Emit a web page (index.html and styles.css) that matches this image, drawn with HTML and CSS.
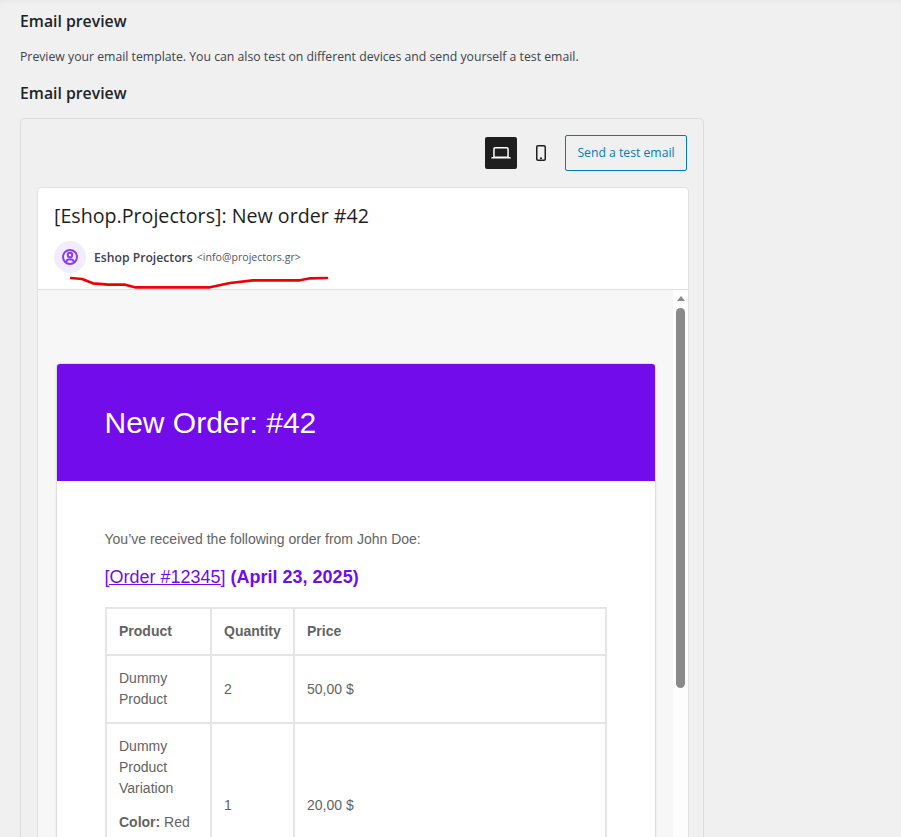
FILE: index.html
```html
<!DOCTYPE html>
<html lang="en">
<head>
<meta charset="utf-8">
<title>Email preview</title>
<link rel="stylesheet" href="styles.css">
</head>
<body>
<main class="page">
  <h2 class="title first">Email preview</h2>
  <p class="desc">Preview your email template. You can also test on different devices and send yourself a test email.</p>
  <h2 class="title">Email preview</h2>
  <section class="panel">
    <div class="toolbar">
      <button class="icon-btn active" aria-label="Desktop">
        <svg width="24" height="24" viewBox="0 0 24 24" fill="currentColor"><path d="M20.500 16h-.7V8c0-1.100-.9-2-2-2H6.200c-1.100 0-2 .9-2 2v8h-.7c-.8 0-1.500.7-1.500 1.500h20c0-.8-.7-1.500-1.500-1.500zM5.700 8c0-.3.2-.5.5-.5h11.600c.3 0 .5.200.5.500v7.600H5.700V8z"/></svg>
      </button>
      <button class="icon-btn" aria-label="Mobile">
        <svg width="24" height="24" viewBox="0 0 24 24" fill="currentColor"><path d="M15 4H9c-1.100 0-2 .9-2 2v12c0 1.100.9 2 2 2h6c1.100 0 2-.9 2-2V6c0-1.100-.9-2-2-2zm.5 14c0 .3-.2.500-.5.500H9c-.3 0-.5-.2-.5-.5V6c0-.3.2-.5.5-.5h6c.3 0 .5.200.5.500v12zM11 16.500h2V18h-2z"/></svg>
      </button>
      <button class="send">Send a test email</button>
    </div>
    <div class="card">
      <header class="mail-head">
        <h3 class="subject">[Eshop.Projectors]: New order #42</h3>
        <div class="sender">
          <span class="avatar">
            <svg width="20" height="20" viewBox="0 0 20 20" fill="none" stroke="#8b3df0" stroke-width="2"><circle cx="10" cy="10" r="7"/><circle cx="10" cy="8" r="2.300"/><path d="M6 15c.5-1.900 1.800-2.700 4-2.700s3.500.8 4 2.700"/></svg>
          </span>
          <strong class="sender-name">Eshop Projectors</strong>
          <span class="sender-mail">&lt;info@projectors.gr&gt;</span>
        </div>
        <svg class="scribble" width="262" height="16" viewBox="0 0 262 16" fill="none" stroke="#f00000" stroke-width="2.700" stroke-linecap="round" stroke-linejoin="round"><path d="M1 3 12 4 23 8.300 38 9.700H55L65 12.300H140L160 8 183 5.300H230L240 3.300 257 3"/></svg>
      </header>
      <div class="viewport">
        <div class="mail-bg">
          <article class="mail">
            <div class="mail-banner"><h1>New Order: #42</h1></div>
            <div class="mail-body">
              <p class="intro">You’ve received the following order from John Doe:</p>
              <h2 class="order"><a href="#">[Order #12345]</a> (April 23, 2025)</h2>
              <table class="items">
                <thead>
                  <tr><th>Product</th><th>Quantity</th><th>Price</th></tr>
                </thead>
                <tbody>
                  <tr><td class="prod">Dummy Product</td><td>2</td><td>50,00 $</td></tr>
                  <tr><td class="prod variation">Dummy Product Variation<div class="meta"><b>Color:</b> Red</div></td><td>1</td><td>20,00 $</td></tr>
                </tbody>
              </table>
            </div>
          </article>
        </div>
        <div class="scrollbar">
          <span class="arrow"></span>
          <span class="thumb"></span>
        </div>
      </div>
    </div>
  </section>
</main>
</body>
</html>
```
FILE: styles.css
```css
* { box-sizing: border-box; }
html, body { margin: 0; height: 837px; overflow: hidden; }
body {
  background: #f0f0f1;
  color: #3c434a;
  font-family: "Open Sans", "Noto Sans", sans-serif;
  box-shadow: inset 0 5px 5px -3px #e8e8e8;
}
.page { padding: 0 0 0 20px; width: 704px; height: 837px; overflow: hidden; }
.title {
  margin: 0;
  font-size: 15.800px;
  line-height: 22px;
  font-weight: 600;
  color: #1d2327;
}
.title.first { padding-top: 10px; }
.desc {
  margin: 15px 0 16px;
  font-size: 12.250px;
  line-height: 19px;
}
.panel {
  margin-top: 14px;
  height: 760px;
  border: 1px solid #dcdcde;
  border-radius: 4px;
  padding: 16px 14px 0 16px;
  background: #f0f0f1;
}
.toolbar {
  display: flex;
  justify-content: flex-end;
  align-items: center;
  height: 36px;
  gap: 8px;
  padding-right: 2px;
}
.icon-btn {
  width: 32px;
  height: 32px;
  padding: 0;
  border: 0;
  border-radius: 2px;
  background: transparent;
  color: #1e1e1e;
  display: flex;
  align-items: center;
  justify-content: center;
}
.icon-btn.active { background: #1e1e1e; color: #fff; }
.send {
  width: 122px;
  height: 36px;
  background: transparent;
  border: 1px solid #007cba;
  border-radius: 2px;
  color: #007cba;
  font: 12.200px/1 "Open Sans", sans-serif;
  padding: 0;
}
.card {
  margin-top: 16px;
  width: 652px;
  background: #fff;
  border: 1px solid #e0e0e0;
  border-radius: 4px 4px 0 0;
}
.mail-head {
  position: relative;
  height: 102px;
  padding: 15px 16px 0;
  border-bottom: 1px solid #e0e0e0;
}
.subject {
  margin: 0;
  font-size: 19.650px;
  line-height: 26px;
  font-weight: 400;
  color: #1e1e1e;
}
.sender {
  display: flex;
  align-items: center;
  margin-top: 12px;
  height: 32px;
}
.avatar {
  flex: none;
  width: 32px;
  height: 32px;
  border-radius: 50%;
  background: #f1ecff;
  display: flex;
  align-items: center;
  justify-content: center;
  margin-right: 8px;
}
.sender-name { font-size: 12.200px; font-weight: 600; color: #3c434a; margin-right: 4px; }
.sender-mail { font-size: 10.600px; color: #50575e; }
.scribble { position: absolute; left: 32px; top: 87px; }
.viewport { display: flex; height: 600px; background: #f7f7f7; }
.mail-bg { flex: 1; min-width: 0; padding: 74px 18px 0 19px; }
.mail {
  background: #fff;
  border-radius: 3px;
  box-shadow: 0 0 0 1px rgba(0,0,0,.07), 0 1px 4px rgba(0,0,0,.08);
  font-family: "Liberation Sans", Arial, sans-serif;
  color: #636363;
}
.mail-banner {
  background: #720cea;
  color: #fff;
  height: 117px;
  padding: 0 47.500px;
  display: flex;
  align-items: center;
  border-radius: 3px 3px 0 0;
}
.mail-banner h1 { margin: 0; font-size: 30px; font-weight: 400; line-height: 36px; }
.mail-body { padding: 48px 48px 40px; }
.intro { margin: 0 0 16px -.5px; font-size: 14px; line-height: 21px; }
.order {
  margin: 0 0 19px -.5px;
  font-size: 18px;
  line-height: 22px;
  font-weight: 700;
  color: #720cea;
}
.order a { color: #720cea; font-weight: 400; }
.items { width: 502px; border-collapse: collapse; font-size: 14px; line-height: 21px; border: 2px solid #e5e5e5; }
.items th, .items td { border: 2px solid #e5e5e5; padding: 12px; text-align: left; vertical-align: middle; }
.items th { color: #636363; font-weight: 700; height: 47px; padding: 0 12px; }
.items th:nth-child(1), .items td:nth-child(1) { width: 105px; }
.items th:nth-child(2), .items td:nth-child(2) { width: 83px; }
.items td.variation { padding-bottom: 53px; }
.meta { margin-top: 13px; }
.scrollbar {
  flex: none;
  width: 15px;
  background: #fdfdfd;
  display: flex;
  flex-direction: column;
  align-items: center;
  padding-top: 6px;
}
.arrow {
  width: 0;
  height: 0;
  border-left: 4.500px solid transparent;
  border-right: 4.500px solid transparent;
  border-bottom: 5px solid #8a8a8a;
}
.thumb {
  margin-top: 7px;
  width: 9px;
  height: 380px;
  background: #8a8a8a;
  border-radius: 4.500px;
}
```
